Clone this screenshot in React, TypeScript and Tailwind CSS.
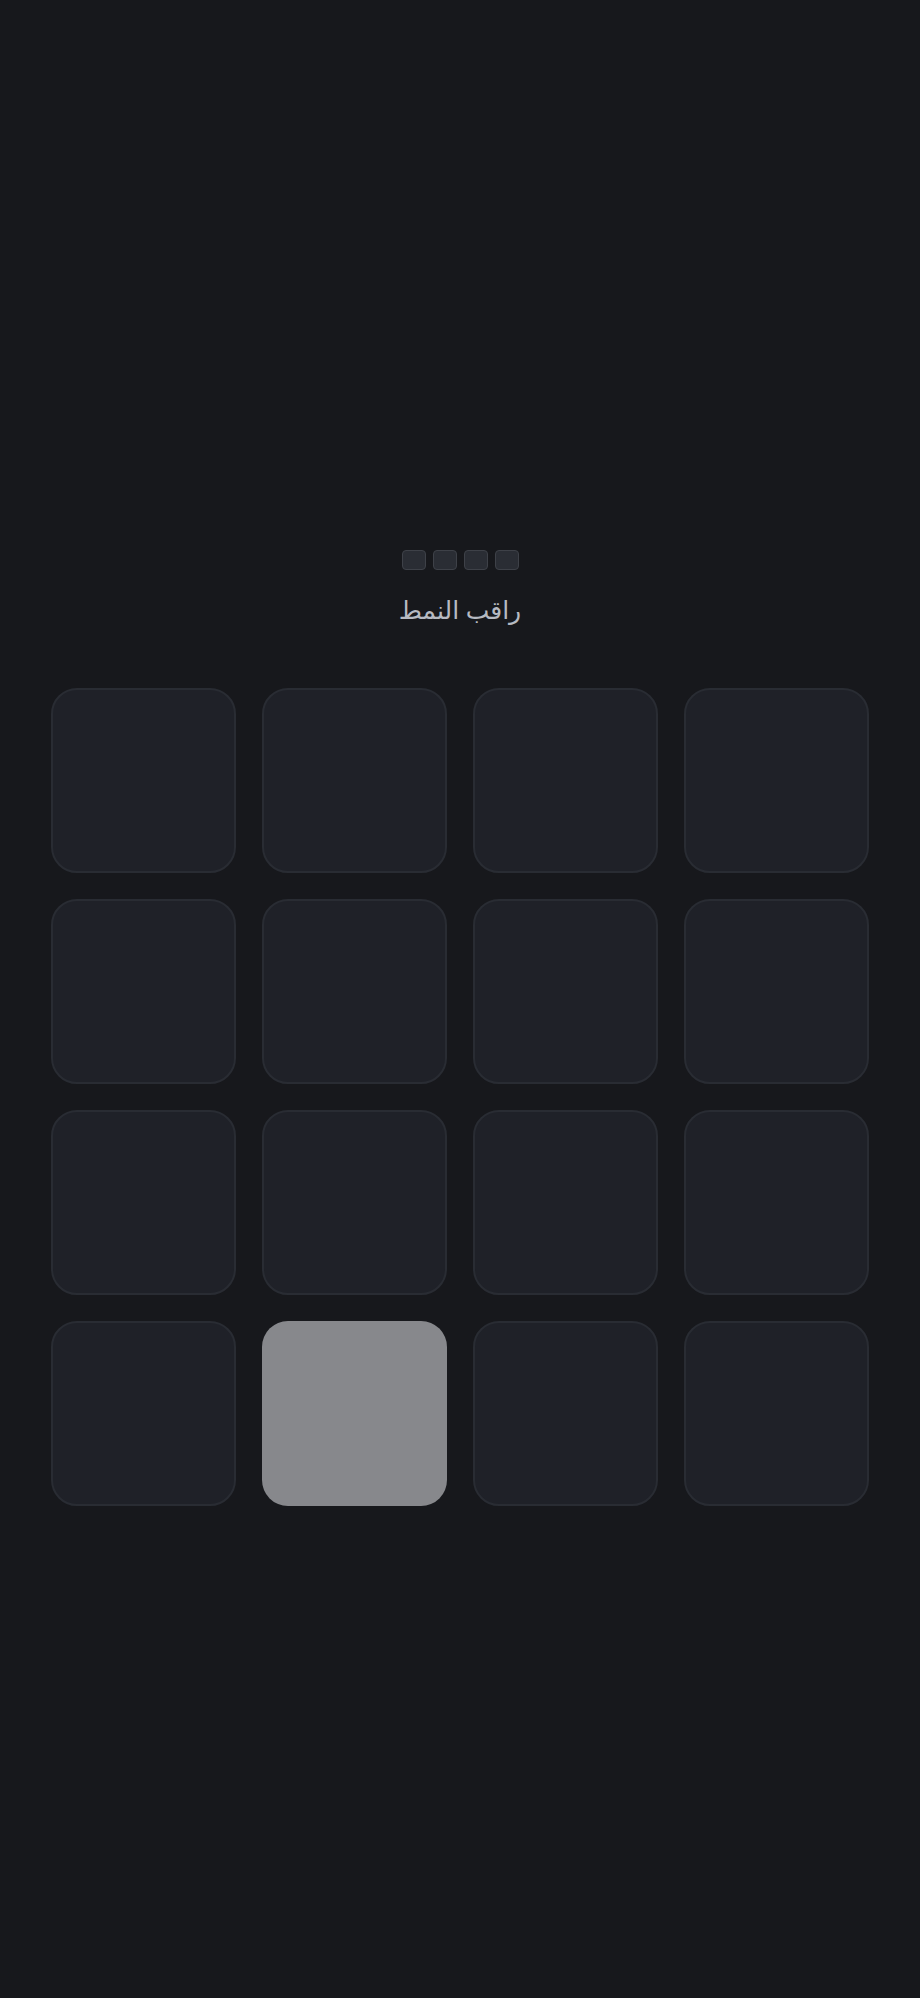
import React from "react";

export default function App() {
  const tiles = Array.from({ length: 16 }, (_, i) => i);
  const active = 13;
  return (
    <div className="min-h-[1998px] w-full bg-[#17181c] flex flex-col items-center pt-[550px]" style={{ fontFamily: '"Noto Sans", "DejaVu Sans", sans-serif' }}>
      <div className="flex gap-[7px]">
        {[0, 1, 2, 3].map((i) => (
          <div key={i} className="w-[24px] h-[20px] rounded-[4px] bg-[#2a2d34] border border-[#3e4148]" />
        ))}
      </div>
      <div dir="rtl" className="mt-[21px] text-[25px] leading-[37px] text-[#b6bac2]">
        راقب النمط
      </div>
      <div className="mt-[60px] w-full px-[51px]">
        <div className="grid grid-cols-4 gap-[26px]">
          {tiles.map((i) => (
            <div
              key={i}
              className={
                i === active
                  ? "aspect-square rounded-[26px] bg-[#87888c]"
                  : "aspect-square rounded-[26px] bg-[#1f2128] border-2 border-[#292c33]"
              }
            />
          ))}
        </div>
      </div>
    </div>
  );
}
